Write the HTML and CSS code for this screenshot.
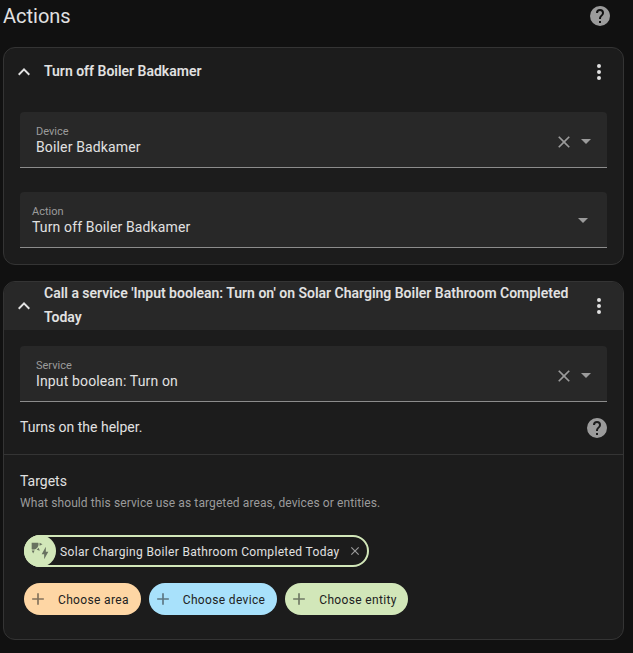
FILE: index.html
```html
<!DOCTYPE html>
<html lang="en">
<head>
<meta charset="utf-8">
<title>Actions</title>
<link rel="stylesheet" href="styles.css">
</head>
<body>
<svg class="defs" aria-hidden="true">
  <symbol id="help" viewBox="0 0 24 24"><path d="M15.07,11.25L14.17,12.17C13.45,12.89 13,13.5 13,15H11V14.5C11,13.39 11.45,12.39 12.17,11.67L13.41,10.41C13.78,10.05 14,9.55 14,9C14,7.89 13.1,7 12,7A2,2 0 0,0 10,9H8A4,4 0 0,1 12,5A4,4 0 0,1 16,9C16,9.88 15.64,10.67 15.07,11.25M13,19H11V17H13M12,2A10,10 0 0,0 2,12A10,10 0 0,0 12,22A10,10 0 0,0 22,12C22,6.47 17.5,2 12,2Z"/></symbol>
  <symbol id="up" viewBox="0 0 24 24"><path d="M7.41,15.41L12,10.83L16.59,15.41L18,14L12,8L6,14L7.41,15.41Z"/></symbol>
  <symbol id="dots" viewBox="0 0 24 24"><path d="M12,16A2,2 0 0,1 14,18A2,2 0 0,1 12,20A2,2 0 0,1 10,18A2,2 0 0,1 12,16M12,10A2,2 0 0,1 14,12A2,2 0 0,1 12,14A2,2 0 0,1 10,12A2,2 0 0,1 12,10M12,4A2,2 0 0,1 14,6A2,2 0 0,1 12,8A2,2 0 0,1 10,6A2,2 0 0,1 12,4Z"/></symbol>
  <symbol id="close" viewBox="0 0 24 24"><path d="M19,6.41L17.59,5L12,10.59L6.41,5L5,6.41L10.59,12L5,17.59L6.41,19L12,13.41L17.59,19L19,17.59L13.41,12L19,6.41Z"/></symbol>
  <symbol id="caret" viewBox="0 0 24 24"><path d="M7,10L12,15L17,10H7Z"/></symbol>
  <symbol id="plus" viewBox="0 0 24 24"><path d="M19,13H13V19H11V13H5V11H11V5H13V11H19V13Z"/></symbol>
  <symbol id="solar" viewBox="0 0 24 24"><path d="M11.45,2V5.55L15,3.77L11.45,2M10.45,8L8,10.46L11.75,11.71L10.45,8M2,11.45L3.77,15L5.55,11.45H2M10,2H2V10C2.57,10.17 3.17,10.25 3.77,10.25C7.35,10.26 10.26,7.35 10.27,3.75C10.26,3.16 10.17,2.57 10,2M17,22V16H14L19,7V13H22L17,22Z"/></symbol>
</svg>

<header class="page-header">
  <h1>Actions</h1>
  <svg class="icon muted"><use href="#help"/></svg>
</header>

<main>
  <section class="card">
    <div class="card-header">
      <svg class="icon"><use href="#up"/></svg>
      <h2>Turn off Boiler Badkamer</h2>
      <svg class="icon"><use href="#dots"/></svg>
    </div>
    <div class="card-body">
      <div class="field">
        <div class="field-text"><label>Device</label><span>Boiler Badkamer</span></div>
        <svg class="icon small"><use href="#close"/></svg>
        <svg class="icon caret"><use href="#caret"/></svg>
      </div>
      <div class="field select">
        <div class="field-text"><label>Action</label><span>Turn off Boiler Badkamer</span></div>
        <svg class="icon caret"><use href="#caret"/></svg>
      </div>
    </div>
  </section>

  <section class="card">
    <div class="card-header selected">
      <svg class="icon"><use href="#up"/></svg>
      <h2>Call a service 'Input boolean: Turn on' on Solar Charging Boiler Bathroom Completed Today</h2>
      <svg class="icon"><use href="#dots"/></svg>
    </div>
    <div class="card-body service">
      <div class="field">
        <div class="field-text"><label>Service</label><span>Input boolean: Turn on</span></div>
        <svg class="icon small"><use href="#close"/></svg>
        <svg class="icon caret"><use href="#caret"/></svg>
      </div>
      <div class="description">
        <p>Turns on the helper.</p>
        <svg class="icon muted"><use href="#help"/></svg>
      </div>
    </div>
    <div class="targets">
      <h3>Targets</h3>
      <p class="hint">What should this service use as targeted areas, devices or entities.</p>
      <div class="chips">
        <div class="chip target">
          <span class="badge"><svg class="icon small"><use href="#solar"/></svg></span>
          <span class="chip-label">Solar Charging Boiler Bathroom Completed Today</span>
          <svg class="icon remove"><use href="#close"/></svg>
        </div>
      </div>
      <div class="chips">
        <div class="chip add area"><svg class="icon small"><use href="#plus"/></svg><span class="chip-label">Choose area</span></div>
        <div class="chip add device"><svg class="icon small"><use href="#plus"/></svg><span class="chip-label">Choose device</span></div>
        <div class="chip add entity"><svg class="icon small"><use href="#plus"/></svg><span class="chip-label">Choose entity</span></div>
      </div>
    </div>
  </section>
</main>
</body>
</html>
```
FILE: styles.css
```css
* { box-sizing: border-box; }
body {
  margin: 0;
  height: 653px;
  overflow: hidden;
  background: #111;
  color: #e1e1e1;
  font: 14px/20px Roboto, sans-serif;
}
h1, h2, h3, p { margin: 0; }
.defs { display: none; }
.icon { width: 24px; height: 24px; flex: none; fill: currentColor; display: block; }
.small { width: 20px; height: 20px; }
.muted { color: #9b9b9b; }

.page-header {
  display: flex;
  justify-content: space-between;
  align-items: center;
  height: 32px;
  padding: 0 21px 0 3px;
}
h1 { font-size: 20px; font-weight: 400; line-height: 32px; }

main {
  display: flex;
  flex-direction: column;
  gap: 16px;
  padding: 15px 9px 0 3px;
}
.card { border: 1px solid #343434; border-radius: 12px; background: #1c1c1c; overflow: hidden; }
.card-header {
  display: flex;
  align-items: center;
  height: 48px;
  padding: 0 12px 0 8px;
}
.card-header h2 {
  flex: 1;
  margin: 0 16px 0 8px;
  padding-bottom: 2px;
  font-size: 14px;
  font-weight: 600;
  line-height: 24px;
  letter-spacing: -0.008px;
}
.selected { background: #282828; }
.card-body { display: flex; flex-direction: column; gap: 24px; padding: 16px; }
.service { gap: 0; padding-bottom: 0; }
.field {
  display: flex;
  align-items: center;
  height: 56px;
  padding: 4px 9px 0 16px;
  background: #282828;
  border-bottom: 1px solid #8c8c8c;
  border-radius: 4px 4px 0 0;
  color: #9b9b9b;
}
.select { padding: 2px 12px 0; }
.field-text { flex: 1; display: flex; flex-direction: column; padding-bottom: 2px; }
.select .field-text { padding-bottom: 0; }
.caret { margin-bottom: 1px; }
.field-text label { font-size: 11px; line-height: 13px; }
.field-text span { color: #e1e1e1; line-height: 19px; letter-spacing: 0.14px; }

.description { display: flex; justify-content: space-between; align-items: center; height: 52px; }
.description p { padding-bottom: 2px; }
.description .icon { margin-right: -2px; }
.targets { border-top: 1px solid #343434; padding: 16px 16px 24px; }
h3 { font-size: 14px; font-weight: 400; line-height: 20px; }
.hint { color: #9b9b9b; font-size: 12px; line-height: 24px; letter-spacing: 0.1px; }
.chips { display: flex; gap: 8px; padding: 0 4px; margin-top: 16px; }
.hint + .chips { margin-top: 20px; }
.chip {
  display: flex;
  align-items: center;
  height: 32px;
  border-radius: 16px;
  font-size: 12px;
  letter-spacing: 0.34px;
}
.chip-label { padding-top: 2px; }
.target { border: 2px solid #d2e7b9; padding-right: 5px; }
.badge {
  display: flex;
  align-items: center;
  justify-content: center;
  width: 32px;
  height: 32px;
  margin: -2px 4px -2px -2px;
  border-radius: 50%;
  background: #d2e7b9;
  color: #687260;
}
.remove { width: 14px; height: 14px; margin-left: 8px; color: #9b9b9b; }
.add { padding: 0 12px 0 4px; color: #212121; }
.add .icon { margin-right: 10px; opacity: 0.55; }
.area { background: #fed6a4; }
.device { background: #a8e1fb; }
.entity { background: #d2e7b9; padding-right: 11px; }
```
